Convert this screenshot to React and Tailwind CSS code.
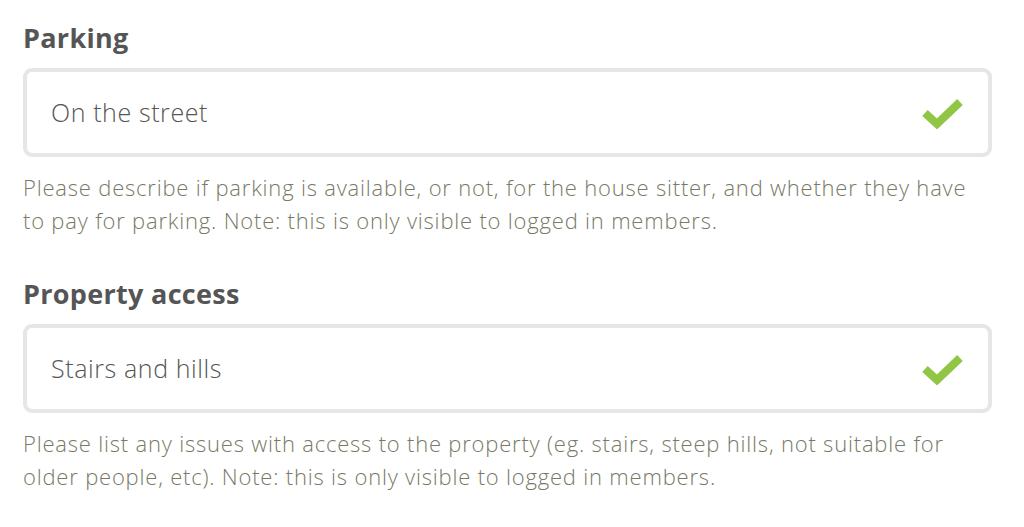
import React from "react";

function Check() {
  return (
    <svg width="42" height="32" viewBox="0 0 42 32" className="shrink-0">
      <path d="M3 16 L15 27 L38 5" fill="none" stroke="#8fc646" strokeWidth="8" strokeLinejoin="miter" />
    </svg>
  );
}

function Field({ label, value, help }) {
  return (
    <div className="flex flex-col">
      <div className="text-[27px] font-bold leading-[34px] tracking-[0.3px] text-[#555555]">{label}</div>
      <div className="mt-[13px] flex h-[89px] items-center justify-between rounded-[9px] border-4 border-[#e6e6e6] bg-white pl-[24px] pr-[24px]">
        <span className="text-[25px] font-light tracking-[0.6px] text-[#555555]">{value}</span>
        <Check />
      </div>
      <p className="mt-[14px] text-[22px] font-light leading-[33px] tracking-[0.8px] text-[#777a66]">{help}</p>
    </div>
  );
}

export default function App() {
  return (
    <div className="flex h-[527px] w-[1024px] flex-col gap-[40px] bg-white pl-[23px] pr-[32px] pt-[21px]" style={{ fontFamily: "'Open Sans', sans-serif" }}>
      <Field
        label="Parking"
        value="On the street"
        help="Please describe if parking is available, or not, for the house sitter, and whether they have to pay for parking. Note: this is only visible to logged in members."
      />
      <Field
        label="Property access"
        value="Stairs and hills"
        help="Please list any issues with access to the property (eg. stairs, steep hills, not suitable for older people, etc). Note: this is only visible to logged in members."
      />
    </div>
  );
}
